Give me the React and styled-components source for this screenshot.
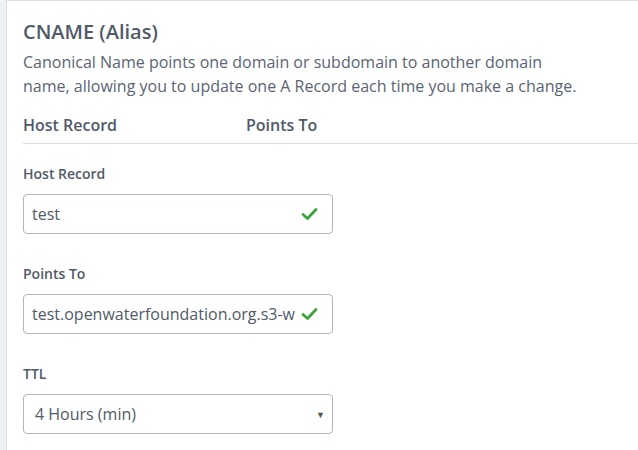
import React from "react";
import styled, { createGlobalStyle } from "styled-components";

const Global = createGlobalStyle`
  html, body { margin: 0; padding: 0; background: #eef1f5; overflow: hidden; }
  body { font-family: "Open Sans", "Noto Sans", sans-serif; color: #505a68; }
  * { box-sizing: border-box; }
`;

const Page = styled.div`
  display: flex;
  padding-left: 6px;
  height: 450px;
  overflow: hidden;
`;

const Card = styled.div`
  flex: 1;
  margin-right: -10px;
  background: #fff;
  border: 1px solid #dcdfe4;
  border-bottom: none;
  padding: 16px 0 0 16px;
`;

const Title = styled.h2`
  margin: 0;
  font-size: 20px;
  font-weight: 600;
  line-height: 30px;
  color: #505a68;
`;

const Desc = styled.p`
  margin: 3px 0 0;
  font-size: 16px;
  line-height: 24px;
  color: #5a6473;
  max-width: 560px;
`;

const HeaderRow = styled.div`
  display: grid;
  grid-template-columns: 223px 1fr;
  margin-top: 16px;
  padding-bottom: 7px;
  border-bottom: 1px solid #d9dcdf;
  font-size: 16px;
  font-weight: 600;
  line-height: 22px;
  color: #505a68;
`;

const Form = styled.div`
  display: flex;
  flex-direction: column;
  gap: 30px;
  padding-top: 20px;
  width: 310px;
`;

const Field = styled.div`
  display: flex;
  flex-direction: column;
  gap: 10px;
`;

const Label = styled.label`
  font-size: 14px;
  font-weight: 600;
  line-height: 20px;
  color: #505a68;
`;

const InputBox = styled.div`
  display: flex;
  align-items: center;
  height: 40px;
  border: 1px solid #aeb6c1;
  border-radius: 4px;
  padding: 0 ${(p) => (p.$select ? 7 : 14)}px 0 ${(p) => (p.$select ? 11 : 8)}px;
  font-size: 16px;
  color: #505a68;
  background: #fff;
  gap: 6px;
`;

const Value = styled.span`
  flex: 1;
  white-space: nowrap;
  overflow: hidden;
`;

const Caret = styled.span`
  font-size: 9px;
  color: #555;
`;

const Check = () => (
  <svg width="17" height="14" viewBox="0 0 17 14">
    <path d="M2 7.5 L6.5 11.5 L15 2.5" fill="none" stroke="#3aa63a" strokeWidth="2.8" strokeLinecap="round" strokeLinejoin="round" />
  </svg>
);

export default function App() {
  return (
    <>
      <Global />
      <Page>
        <Card>
          <Title>CNAME (Alias)</Title>
          <Desc>
            Canonical Name points one domain or subdomain to another domain name, allowing you to update one A Record each time you make a change.
          </Desc>
          <HeaderRow>
            <span>Host Record</span>
            <span>Points To</span>
          </HeaderRow>
          <Form>
            <Field>
              <Label>Host Record</Label>
              <InputBox>
                <Value>test</Value>
                <Check />
              </InputBox>
            </Field>
            <Field>
              <Label>Points To</Label>
              <InputBox>
                <Value>test.openwaterfoundation.org.s3-website-us-west-2.amazonaws.com</Value>
                <Check />
              </InputBox>
            </Field>
            <Field>
              <Label>TTL</Label>
              <InputBox $select>
                <Value>4 Hours (min)</Value>
                <Caret>▼</Caret>
              </InputBox>
            </Field>
          </Form>
        </Card>
      </Page>
    </>
  );
}
